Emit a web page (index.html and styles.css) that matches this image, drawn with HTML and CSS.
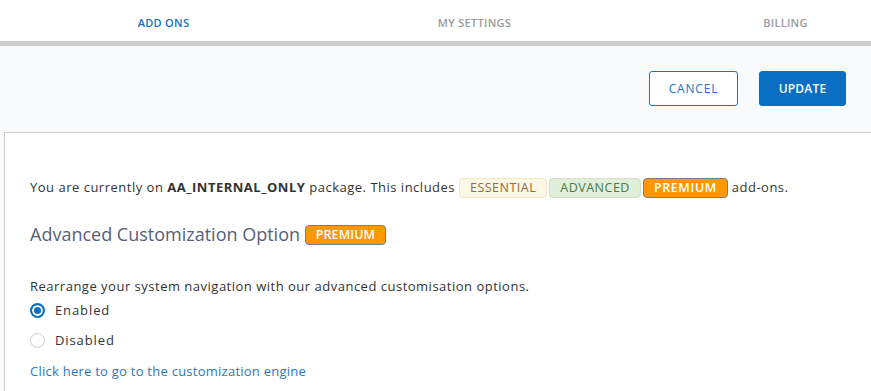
FILE: index.html
```html
<!DOCTYPE html>
<html lang="en">

<head>
  <meta charset="UTF-8">
  <meta name="viewport" content="width=device-width, initial-scale=1.0">
  <title>Add Ons</title>
  <link rel="stylesheet" href="styles.css">
</head>

<body>
  <div class="tabs">
    <a class="tab active" href="#">Add Ons</a>
    <a class="tab" href="#">My Settings</a>
    <a class="tab" href="#">Billing</a>
  </div>

  <div class="toolbar">
    <button class="btn btn-outline">Cancel</button>
    <button class="btn btn-primary">Update</button>
  </div>

  <div class="card">
    <p class="intro">
      You are currently on <b>AA_INTERNAL_ONLY</b> package. This includes
      <span class="badges"><span class="badge essential">Essential</span><span class="badge advanced">Advanced</span><span class="badge premium">Premium</span></span>
      add-ons.
    </p>

    <h2>Advanced Customization Option <span class="badge premium">Premium</span></h2>

    <p class="desc">Rearrange your system navigation with our advanced customisation options.</p>
    <label class="radio"><input type="radio" name="custom" checked> Enabled</label>
    <label class="radio"><input type="radio" name="custom"> Disabled</label>

    <a class="link" href="#">Click here to go to the customization engine</a>
  </div>
</body>

</html>
```

FILE: styles.css
```css
body {
  margin: 0;
  font-family: "Open Sans", "Liberation Sans", sans-serif;
  font-size: 13px;
  color: #333;
  background: #f9fafc;
  overflow: hidden;
}

h2,
p {
  margin: 0;
  padding: 0;
}

.tabs {
  display: flex;
  padding-left: 8px;
  background: #fff;
  border-bottom: 5px solid #ccc;
  overflow: hidden;
}

.tab {
  flex-shrink: 0;
  width: 311px;
  height: 41px;
  line-height: 45px;
  text-align: center;
  text-transform: uppercase;
  text-decoration: none;
  font-size: 11px;
  font-weight: 600;
  letter-spacing: 0.3px;
  color: #9a9a9a;
}

.tab.active {
  color: #1170c4;
  border-bottom: 4px solid #0a6fc2;
  margin-bottom: -5px;
}

.toolbar {
  display: flex;
  justify-content: flex-end;
  gap: 21px;
  padding: 25px 25px 26px;
}

.btn {
  height: 35px;
  border-radius: 3px;
  font-family: inherit;
  font-size: 12px;
  text-transform: uppercase;
  cursor: pointer;
}

.btn-outline {
  width: 89px;
  background: #fff;
  color: #1a73c4;
  border: 1px solid #1a73c4;
  letter-spacing: 0.8px;
}

.btn-primary {
  width: 87px;
  background: #0a6fc2;
  color: #fff;
  border: 1px solid #0a6fc2;
  font-weight: 600;
  letter-spacing: 0.2px;
}

.card {
  margin-left: 4px;
  min-height: 204px;
  background: #fff;
  border-top: 1px solid #ccc;
  border-left: 1px solid #ccc;
  padding: 44px 25px 10px;
  letter-spacing: 0.5px;
}

.intro {
  line-height: 20px;
}

.intro b {
  font-weight: 700;
}

.badges {
  display: inline-flex;
  gap: 2px;
}

.badge {
  display: inline-block;
  height: 20px;
  line-height: 18px;
  box-sizing: border-box;
  padding: 0 10px;
  border: 1px solid;
  border-radius: 4px;
  font-size: 12.5px;
  font-weight: 400;
  text-transform: uppercase;
  letter-spacing: 0.5px;
  vertical-align: 1px;
}

.essential {
  background: #fdf7e6;
  border-color: #f4e7c2;
  color: #8c6d3a;
}

.advanced {
  background: #dfefd9;
  border-color: #cde3c4;
  color: #4a7a46;
}

.premium {
  background: #fd9800;
  border-color: #7c7c7c;
  color: #fff;
  font-weight: 600;
  letter-spacing: 0.6px;
}

h2 {
  margin-top: 24px;
  font-size: 18px;
  font-weight: 400;
  color: #56607a;
  line-height: 24px;
  letter-spacing: 0;
}

h2 .badge {
  vertical-align: 2px;
  letter-spacing: 0.1px;
}

.desc {
  margin-top: 30px;
  line-height: 20px;
}

.radio {
  display: flex;
  align-items: center;
  gap: 9px;
  height: 30px;
  margin-top: -1px;
  margin-bottom: 1px;
  letter-spacing: 0.9px;
}

.radio input {
  appearance: none;
  margin: 0 1px 0 0;
  width: 15px;
  height: 15px;
  border: 1px solid #ccc;
  border-radius: 50%;
  background: #fff;
}

.radio input:checked {
  border: 2px solid #0a6fc2;
  box-shadow: inset 0 0 0 2px #fff;
  background: #0a6fc2;
}

.link {
  display: block;
  margin-top: 7px;
  color: #2a78c2;
  text-decoration: none;
  letter-spacing: 0.25px;
}
```
